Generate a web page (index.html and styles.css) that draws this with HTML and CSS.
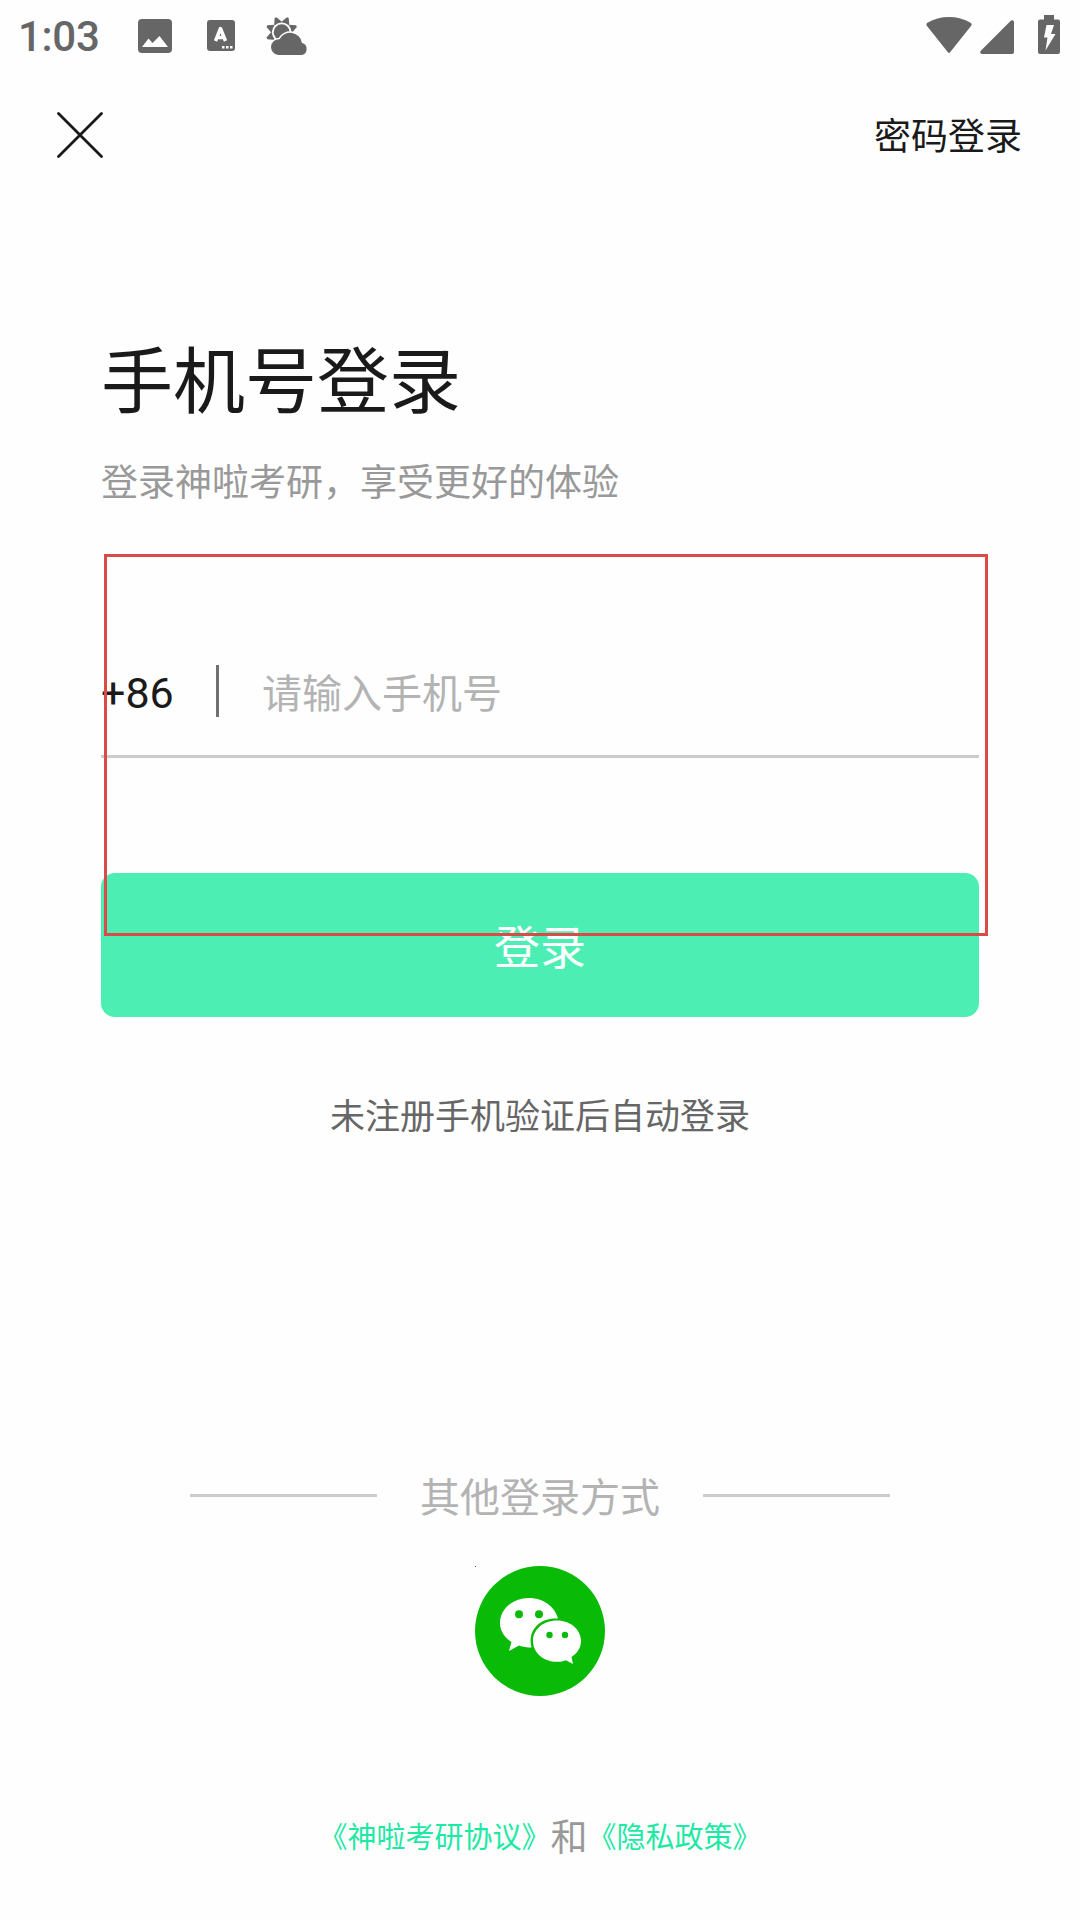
FILE: index.html
```html
<!DOCTYPE html>
<html lang="zh-CN">
<head>
    <meta charset="UTF-8">
    <meta name="viewport" content="width=device-width, initial-scale=1.0">
    <title>手机号登录</title>
    <link rel="stylesheet" href="styles.css">
</head>
<body>
    <div class="status-bar">
        <div class="status-left">
            <span class="time">1:03</span>
            <svg class="icon-image" width="34" height="34" viewBox="0 0 34 34">
                <rect width="34" height="34" rx="4" fill="#666"/>
                <path d="M4 28 L10.5 19.5 L14.5 24 L21.5 17 L30 28 Z" fill="#fefefe"/>
            </svg>
            <svg class="icon-lang" width="28" height="31" viewBox="0 0 28 31">
                <rect width="28" height="31" rx="3" fill="#666"/>
                <path d="M8.5 21 L13.5 8.5 L18.5 21 M10 17.5 H17" fill="none" stroke="#fefefe" stroke-width="3.5" stroke-linejoin="round"/>
                <path d="M15 26h2.500v2.500H15zM19 26h2.500v2.500H19zM23 26h2.500v2.500H23z" fill="#fefefe"/>
            </svg>
            <svg class="icon-weather" width="43" height="40" viewBox="0 0 43 40">
                <g fill="#666" transform="translate(15.7 16.3)">
                    <path id="ray" d="M-4.5 -9 L-1 -16 H1 L4.5 -9 Z" transform="rotate(-22.5)"/>
                    <use href="#ray" transform="rotate(45)"/>
                    <use href="#ray" transform="rotate(90)"/>
                    <use href="#ray" transform="rotate(-45)"/>
                    <use href="#ray" transform="rotate(-90)"/>
                </g>
                <circle cx="15.7" cy="16.3" r="9.8" fill="#fefefe"/>
                <circle cx="15.7" cy="16.3" r="8" fill="#666"/>
                <path d="M12.500 39 A8 8 0 0 1 5 31 A8 8 0 0 1 13.500 23.200 A12 12 0 0 1 36 27 A6.200 6.200 0 0 1 36 39 Z" fill="#666" stroke="#fefefe" stroke-width="3" paint-order="stroke"/>
            </svg>
        </div>
        <div class="status-right">
            <svg class="icon-wifi" width="46" height="37" viewBox="0 0 46 37">
                <path d="M1 9 Q-0.5 7 1.5 5.8 Q11 0 23 0 T44.5 5.8 Q46.5 7 45 9 L24.3 35 Q23 37 21.7 35 Z" fill="#666"/>
            </svg>
            <svg class="icon-signal" width="34" height="34" viewBox="0 0 34 34">
                <path d="M0.6 31 L31 0.6 Q34 -0.6 34 2 V32 Q34 34 32 34 H2 Q-0.6 34 0.6 31 Z" fill="#666"/>
            </svg>
            <svg class="icon-battery" width="22" height="39" viewBox="0 0 22 39">
                <path d="M6 0 H16 V4.500 H20 Q22 4.500 22 6.500 V37 Q22 39 20 39 H2 Q0 39 0 37 V6.500 Q0 4.500 2 4.500 H6 Z" fill="#666"/>
                <path d="M8.500 10 H16 L13 19 H17.500 L7.500 35.500 L9.500 22.500 H6 Z" fill="#fefefe"/>
            </svg>
        </div>
    </div>

    <div class="nav-bar">
        <svg class="close" width="46" height="46" viewBox="0 0 46 46">
            <path d="M1.500 1.500 L44.500 44.500 M44.500 1.500 L1.500 44.500" stroke="#1a1a1a" stroke-width="2.800" stroke-linecap="round"/>
        </svg>
        <a class="password-login">密码登录</a>
    </div>

    <div class="login">
        <h1>手机号登录</h1>
        <p class="subtitle">登录神啦考研，享受更好的体验</p>
        <form class="login-form">
            <div class="phone-row">
                <span class="area-code">+86</span>
                <span class="divider"></span>
                <input type="text" name="phone" placeholder="请输入手机号">
            </div>
            <button type="button" class="login-btn">登录</button>
            <div class="highlight"></div>
        </form>
        <p class="hint">未注册手机验证后自动登录</p>
    </div>

    <div class="other-login">
        <div class="other-title">
            <span class="line"></span>
            <span>其他登录方式</span>
            <span class="line"></span>
        </div>
        <a class="wechat">
            <svg width="130" height="130" viewBox="0 0 130 130">
                <circle cx="65" cy="65" r="65" fill="#09bb07"/>
                <path d="M54 32 C38 32 25 43 25 57 C25 65 29.500 71.500 36.500 76 L34 85 L44 79.500 C48 81 52 81.500 56.500 81.500 C52.500 67 62 51.500 83 52.500 C80 40.500 68 32 54 32 Z" fill="#fff"/>
                <path d="M82 54.500 C68 54.500 58 63.500 58 75 C58 87 69 95.800 82 95.800 C85.500 95.800 88 95.300 91 94.300 L98 98 L96.500 91 C102 87.500 106 82 106 75 C106 63.500 95.500 54.500 82 54.500 Z" fill="#fff"/>
                <g fill="#09bb07">
                    <circle cx="44" cy="48.300" r="4"/>
                    <circle cx="64" cy="48.300" r="4"/>
                    <circle cx="74.500" cy="69" r="3.200"/>
                    <circle cx="90" cy="69" r="3.200"/>
                </g>
            </svg>
        </a>
    </div>

    <div class="agreement">
        <a>《神啦考研协议》</a><span>和</span><a>《隐私政策》</a>
    </div>
</body>
</html>
```

FILE: styles.css
```css
* {
    box-sizing: border-box;
}
body {
    margin: 0;
    width: 1080px;
    height: 1920px;
    overflow: hidden;
    background-color: #fefefe;
    color: #1a1a1a;
    font-family: "Noto Sans CJK SC", sans-serif;
}
h1, p {
    margin: 0;
    font-weight: 400;
}
svg {
    display: block;
}

/* status bar */
.status-bar {
    display: flex;
    justify-content: space-between;
    height: 72px;
    padding: 0 20px 0 18px;
}
.status-left,
.status-right {
    display: flex;
    align-items: flex-start;
}
.time {
    width: 120px;
    padding-top: 13px;
    font-family: Roboto, sans-serif;
    font-size: 42px;
    font-weight: 500;
    line-height: 48px;
    letter-spacing: -0.3px;
    color: #666;
}
.icon-image {
    margin-top: 19px;
}
.icon-lang {
    margin: 20px 0 0 35px;
}
.icon-weather {
    margin: 16px 0 0 31px;
}
.icon-wifi {
    margin-top: 17px;
}
.icon-signal {
    margin: 20px 0 0 8px;
}
.icon-battery {
    margin: 15px 0 0 24px;
}

/* nav */
.nav-bar {
    display: flex;
    justify-content: space-between;
    align-items: center;
    height: 126px;
    padding: 0 58px 0 57px;
}
.password-login {
    margin-top: -2px;
    font-size: 37px;
    line-height: 54px;
}

/* login */
.login {
    padding: 123px 101px 0;
}
h1 {
    font-size: 72px;
    line-height: 110px;
}
.subtitle {
    margin-top: 22px;
    font-size: 37px;
    line-height: 54px;
    color: #999;
}
.login-form {
    position: relative;
    padding-top: 118px;
}
.phone-row {
    display: flex;
    align-items: center;
    height: 133px;
    padding-top: 2px;
    border-bottom: 3px solid #ccc;
}
.area-code {
    width: 115px;
    padding-top: 4px;
    font-family: Roboto, sans-serif;
    font-size: 43px;
    line-height: 50px;
}
.divider {
    width: 3px;
    height: 52px;
    background-color: #707070;
}
.phone-row input {
    flex: 1;
    margin-left: 43px;
    padding: 0;
    border: none;
    outline: none;
    background: none;
    font-family: inherit;
    font-size: 40px;
}
.phone-row input::placeholder {
    color: #b3b3b3;
}
.login-btn {
    display: block;
    width: 100%;
    height: 144px;
    margin-top: 115px;
    padding: 0 0 3px;
    border: none;
    border-radius: 14px;
    background-color: #4ceeb4;
    color: #fff;
    font-family: inherit;
    font-size: 46px;
}
/* red frame over the form */
.highlight {
    position: absolute;
    top: 47px;
    left: 3px;
    width: 884px;
    height: 382px;
    border: 3px solid #d94a48;
}
.hint {
    margin-top: 71px;
    font-size: 35px;
    line-height: 52px;
    text-align: center;
    color: #666;
}

/* other login */
.other-login {
    padding-top: 325px;
}
.other-title {
    display: flex;
    justify-content: center;
    align-items: center;
    gap: 43px;
    font-size: 40px;
    line-height: 60px;
    color: #b3b3b3;
}
.line {
    width: 187px;
    height: 3px;
    background-color: #ccc;
}
.wechat {
    position: relative;
    display: block;
    width: 130px;
    margin: 41px auto 0;
}
.wechat::before {
    content: "";
    position: absolute;
    top: 0;
    left: 0;
    width: 1px;
    height: 1px;
    background-color: #555;
}

/* agreement */
.agreement {
    display: flex;
    justify-content: center;
    align-items: center;
    height: 54px;
    margin-top: 112px;
    font-size: 29px;
    color: #1de9a4;
}
.agreement span {
    font-size: 37px;
    color: #999;
}
```
